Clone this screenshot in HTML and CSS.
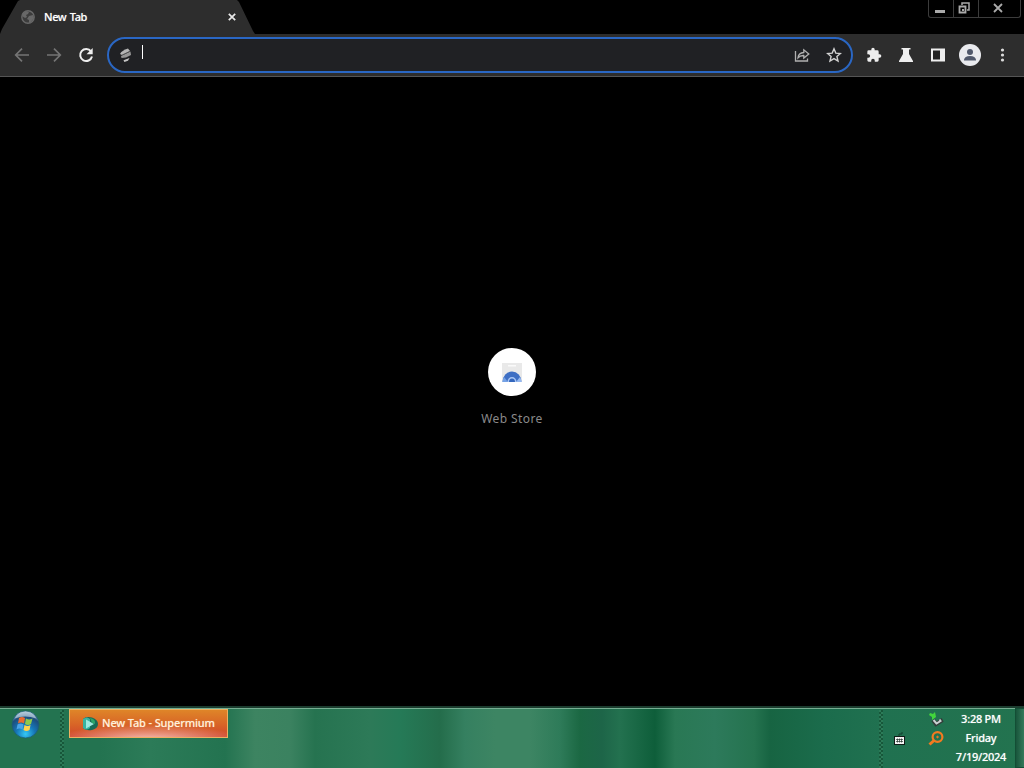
FILE: index.html
```html
<!DOCTYPE html>
<html lang="en">
<head>
  <meta charset="UTF-8">
  <title>New Tab</title>
  <link rel="stylesheet" href="styles.css">
</head>
<body>

<div class="titlebar">
  <div class="tab">
    <svg class="globe" width="14" height="14" viewBox="0 0 14 14">
      <circle cx="7" cy="7" r="6.2" fill="#3c3c3c" stroke="#686868" stroke-width="1.4"/>
      <path d="M2 3l3-2 3 1-1 2-2 1 1 2-2 1-3-2zM8 6l4-1 1 3-3 4-2 1 0-3-2-1z" fill="#686868"/>
    </svg>
    <span class="tab-title">New Tab</span>
    <svg class="tab-close" width="8" height="8" viewBox="0 0 8 8">
      <path d="M.8.8l6.4 6.4M7.2.8L.8 7.2" stroke="#e8e8e8" stroke-width="1.7"/>
    </svg>
  </div>
  <div class="window-buttons">
    <div class="win-btn minimize">
      <svg width="12" height="12" viewBox="0 0 12 12"><path d="M1 9h10v3H1z" fill="#aaa"/></svg>
    </div>
    <div class="win-btn restore">
      <svg width="12" height="12" viewBox="0 0 12 12">
        <path d="M4 3V1h7v7H9" fill="none" stroke="#aaa" stroke-width="1.5"/>
        <path d="M1.5 4.5h6v6h-6z" fill="none" stroke="#aaa" stroke-width="1.8"/>
        <path d="M4 7h2v2H4z" fill="#aaa"/>
      </svg>
    </div>
    <div class="win-btn close">
      <svg width="10" height="10" viewBox="0 0 10 10"><path d="M1 1l8 8M9 1L1 9" stroke="#aaa" stroke-width="1.8"/></svg>
    </div>
  </div>
</div>

<div class="toolbar">
  <div class="nav">
    <svg width="16" height="16" viewBox="0 0 16 16" fill="none" stroke="#747474" stroke-width="1.7"><path d="M15 8H2M8 1.7L1.7 8 8 14.3"/></svg>
    <svg width="16" height="16" viewBox="0 0 16 16" fill="none" stroke="#747474" stroke-width="1.7"><path d="M1 8h13M8 1.7L14.3 8 8 14.3"/></svg>
    <svg width="16" height="16" viewBox="0 0 16 16"><path d="M13 4.4A6 6 0 1 0 14 9.5" fill="none" stroke="#eee" stroke-width="2"/><path d="M14.7 1v6.2H8.5z" fill="#eee"/></svg>
  </div>
  <div class="omnibox">
    <svg class="site-icon" width="14" height="16" viewBox="0 0 14 16">
      <path d="M1 7Q2.5 3.5 9 1.5l2 2.5L3 8z" fill="#b5b5b5"/>
      <path d="M2 9l9.5-4.5.5 3.5-5 2.5-4.5.5z" fill="#969696"/>
      <path d="M4.5 13.2l6-2.2-1.5 2.7-3.6 1.3z" fill="#c4c4c4"/>
      <path d="M3 8l8-3.7" stroke="#555" stroke-width=".6"/>
    </svg>
    <span class="caret"></span>
    <span class="omnibox-actions">
      <svg width="16" height="16" viewBox="0 0 16 16" fill="none" stroke="#b0b0b0" stroke-width="1.3">
        <path d="M1.5 4v10h12v-2.5"/>
        <path d="M4 10.8q.4-5 5.8-5.3V2.8L14.8 7l-5 4.1V8.5Q6 8.3 4 10.8z"/>
      </svg>
      <svg width="16" height="16" viewBox="0 0 16 16" fill="none" stroke="#d2d2d2" stroke-width="1.4">
        <path d="M8 1.8l1.8 4.3 4.6.4-3.5 3 1.1 4.6L8 11.6l-4 2.5 1.1-4.6-3.5-3 4.6-.4z"/>
      </svg>
    </span>
  </div>
  <div class="actions">
    <svg width="16" height="16" viewBox="0 0 24 24" fill="#eee"><path d="M20.5 11H19V7a2 2 0 0 0-2-2h-4V3.5a2.5 2.5 0 0 0-5 0V5H4a2 2 0 0 0-2 2v3.8h1.5a2.7 2.7 0 0 1 0 5.4H2V20a2 2 0 0 0 2 2h3.8v-1.5a2.7 2.7 0 0 1 5.4 0V22H17a2 2 0 0 0 2-2v-4h1.5a2.5 2.5 0 0 0 0-5z"/></svg>
    <svg width="16" height="16" viewBox="0 0 16 16" fill="#eee"><path d="M3.5 1h9v1.5H11V7l4 7v1H1v-1l4-7V2.5H3.5z"/></svg>
    <svg width="16" height="16" viewBox="0 0 16 16"><path d="M2 2.5h12v11H2z" fill="#222" stroke="#eee" stroke-width="2"/><path d="M10 2h4v12h-4z" fill="#eee"/></svg>
    <svg class="avatar" width="22" height="22" viewBox="0 0 22 22">
      <circle cx="11" cy="11" r="11" fill="#e9eaee"/>
      <circle cx="11" cy="8" r="3" fill="#50586b"/>
      <path d="M5 15.8Q5.5 12 11 12t6 3.8v.7H5z" fill="#50586b"/>
    </svg>
    <svg width="16" height="16" viewBox="0 0 16 16" fill="#ddd"><circle cx="8.5" cy="3" r="1.6"/><circle cx="8.5" cy="8" r="1.6"/><circle cx="8.5" cy="13" r="1.6"/></svg>
  </div>
</div>

<div class="page">
  <div class="shortcut">
    <div class="shortcut-icon">
      <svg width="24" height="24" viewBox="0 0 24 24">
        <path d="M2 3h20v18H2z" fill="#e9e9e9"/>
        <path d="M8 5h8v1.5H8z" fill="#fafafa"/>
        <path d="M2.5 22a9.5 10.5 0 0 1 19 0z" fill="#3e6fc4"/>
        <path d="M2.5 22q0-3 1.5-5l4 5z" fill="#75a2e6"/>
        <path d="M21.5 22q0-3-1.5-5l-4 5z" fill="#94b8f0"/>
        <path d="M7.5 22a4.5 5 0 0 1 9 0z" fill="#a9c6f4"/>
        <path d="M9 22a3 3.5 0 0 1 6 0z" fill="#3467bd"/>
      </svg>
    </div>
    <span class="shortcut-label">Web Store</span>
  </div>
</div>

<div class="taskbar">
  <svg class="start" width="30" height="30" viewBox="0 0 30 30">
    <defs>
      <radialGradient id="orb" cx=".5" cy=".85" r=".85">
        <stop offset="0" stop-color="#35c8f5"/>
        <stop offset=".4" stop-color="#1677b8"/>
        <stop offset=".75" stop-color="#1c4d7c"/>
        <stop offset="1" stop-color="#a9c5d8"/>
      </radialGradient>
    </defs>
    <circle cx="15.5" cy="15.5" r="13.5" fill="url(#orb)" stroke="#1c5f70" stroke-width=".8"/>
    <path d="M4.5 9.500Q8 2.500 15.500 2.500t11 7Q15 5.500 4.500 9.500z" fill="#c5d7e4" opacity=".65"/>
    <path d="M9 9q3-2 6 0l-1 5.5q-3-2-6 0z" fill="#e96b31"/>
    <path d="M16 9.5q3 2 6.5 0l-1.5 5.5q-3 2-6 0z" fill="#91c94a"/>
    <path d="M7.5 15.5q3-2 6 0l-1 5q-3-2-6 0z" fill="#4aa5e6"/>
    <path d="M14.5 16q3 2 6 0l-1 5q-3 2-6 0z" fill="#ffd34d"/>
  </svg>
  <div class="grip"></div>
  <div class="task">
    <svg width="16" height="16" viewBox="0 0 16 16">
      <path d="M1 3Q4 0 10 1.5q6 2 6 6.5t-6 6q-6 1-9-2z" fill="#176b58"/>
      <path d="M1 3Q5 0 8 3v9q-4 3-7 0z" fill="#38b3a1"/>
      <path d="M4 3.5l8 4.5-8 4.5z" fill="#9ce9e0"/>
      <path d="M8 2q6 1 5 6l-3-1z" fill="#2ca568"/>
    </svg>
    <span class="task-title">New Tab - Supermium</span>
  </div>
  <div class="grip tray-grip"></div>
  <div class="tray">
    <svg class="keyboard" width="12" height="14" viewBox="0 0 12 14">
      <path d="M6 4V2h3V0" fill="none" stroke="#123f2d"/>
      <path d="M1 4h11v9H1z" fill="#101c17"/>
      <path d="M2 5h9v7H2z" fill="#f4f4f4"/>
      <path d="M3 7.5h7M3 9.5h7M4.5 6.5v4M6.5 6.5v4M8.5 6.5v4" stroke="#26372f" stroke-width=".7"/>
    </svg>
    <div class="tray-col">
      <svg width="16" height="16" viewBox="0 0 16 16">
        <path d="M5 8l3 4 5-3-1-2" fill="none" stroke="#333d3a" stroke-width="4"/>
        <path d="M5.5 8l3 3.5 4-2.5-1-1.5" fill="none" stroke="#c9d1d1" stroke-width="2"/>
        <path d="M2 1l3 1 2-2 1 5-4 3V5L1 3z" fill="#42d63c"/>
      </svg>
      <svg width="16" height="16" viewBox="0 0 16 16" fill="none" stroke="#f47a20">
        <circle cx="9.5" cy="6" r="4.9" stroke-width="2.2"/>
        <circle cx="9.5" cy="6" r=".8" fill="#f47a20"/>
        <path d="M6 9.5l-4.5 4" stroke-width="3"/>
      </svg>
    </div>
  </div>
  <div class="clock">
    <span class="time">3:28 PM</span>
    <span class="weekday">Friday</span>
    <span class="date">7/19/2024</span>
  </div>
  <div class="show-desktop"></div>
</div>

</body>
</html>
```

FILE: styles.css
```css
* {
  box-sizing: border-box;
}
body {
  margin: 0;
  width: 1024px;
  height: 768px;
  overflow: hidden;
  background: #000;
  font-family: "Noto Sans", "Open Sans", sans-serif;
  display: flex;
  flex-direction: column;
}
svg {
  display: block;
  flex: none;
}

/* Title bar */
.titlebar {
  height: 34px;
  display: flex;
  justify-content: space-between;
  align-items: flex-start;
}
.tab {
  width: 255px;
  height: 34px;
  padding: 0 19px 0 21px;
  background: #2d2d2d;
  clip-path: polygon(0 100%, 2px 29px, 18px 1px, 20px 0, 237px 0, 239px 2px, 253px 31px, 100% 100%);
  display: flex;
  align-items: center;
}
.tab-title {
  margin: 0 0 2px 9px;
  font-size: 11px;
  font-weight: 500;
  letter-spacing: -0.4px;
  word-spacing: 1px;
  color: #fff;
  text-shadow: 0 0 1px rgba(255, 255, 255, .5);
}
.tab-close {
  margin-left: auto;
}
.window-buttons {
  display: flex;
  margin-right: 3px;
  height: 18px;
  border: 1px solid #3c3c3c;
  border-top: 0;
  border-radius: 0 0 3px 3px;
}
.win-btn {
  display: flex;
  justify-content: center;
  align-items: center;
  padding: 0 3px 1px 0;
}
.minimize {
  width: 24px;
}
.minimize svg {
  margin-bottom: 3px;
}
.restore {
  width: 26px;
  padding-right: 4px;
  border: solid #3c3c3c;
  border-width: 0 1px;
}
.close {
  width: 41px;
}

/* Toolbar */
.toolbar {
  height: 43px;
  padding: 0 13px 0 14px;
  background: #2d2d2d;
  border-bottom: 1px solid #555;
  display: flex;
  align-items: center;
}
.nav {
  display: flex;
  gap: 16px;
}
.omnibox {
  width: 746px;
  height: 36px;
  margin-left: 13px;
  padding: 0 9px 0 10px;
  background: #202124;
  border: 2px solid #2a67c4;
  border-radius: 18px;
  display: flex;
  align-items: center;
}
.caret {
  width: 1px;
  height: 14px;
  margin: 0 0 6px 9px;
  background: #fff;
}
.omnibox-actions {
  margin-left: auto;
  display: flex;
  gap: 16px;
}
.actions {
  margin-left: 13px;
  display: flex;
  align-items: center;
  gap: 16px;
}
.avatar {
  margin: 0 -3px;
}

/* New tab page */
.page {
  flex: 1;
  display: flex;
  justify-content: center;
  align-items: flex-start;
  padding-top: 271px;
}
.shortcut {
  display: flex;
  flex-direction: column;
  align-items: center;
}
.shortcut-icon {
  width: 48px;
  height: 48px;
  border-radius: 50%;
  background: #fff;
  display: flex;
  justify-content: center;
  align-items: center;
}
.shortcut-label {
  margin-top: 14px;
  font-size: 12px;
  line-height: 18px;
  letter-spacing: 0.4px;
  color: #8a8a8a;
}

/* Taskbar */
.taskbar {
  height: 62px;
  padding-left: 10px;
  border-top: 2px solid #1c3d2f;
  box-shadow: inset 0 1px #76ae92;
  background: linear-gradient(90deg,
    #237350 0, #237350 100px, #2c7b58 150px, #237350 225px, #3d8461 255px,
    #3b8260 290px, #267350 315px, #2d7a58 370px, #257a57 400px, #246d4b 440px,
    #358060 465px, #3d8563 495px, #3d8563 530px, #2e7b59 560px, #1b6843 580px,
    #1d6548 602px, #23714f 620px, #0e5e3a 655px, #297854 675px, #2d7a5b 715px,
    #25734f 754px, #176442 770px, #1b6c4c 825px, #207150 880px, #23734f 1024px);
  display: flex;
  align-items: flex-start;
}
.taskbar > * {
  flex-shrink: 0;
}
.start {
  margin-top: 1px;
}
.grip {
  width: 4px;
  height: 58px;
  margin: 2px 0 0 20px;
  background: repeating-conic-gradient(#17573a 0 25%, #2c7b58 0 50%) 0 0 / 4px 4px;
}
.task {
  width: 159px;
  height: 29px;
  margin: 1px 0 0 5px;
  padding-left: 12px;
  border: 1px solid #edb061;
  background:
    radial-gradient(ellipse 60% 55% at 50% 110%, rgba(255, 215, 205, .85), transparent),
    linear-gradient(#df8528, #d86427 55%, #cf442c);
  display: flex;
  align-items: center;
}
.task-title {
  margin: 0 0 2px 4px;
  font-size: 11px;
  font-weight: 500;
  letter-spacing: -0.14px;
  white-space: nowrap;
  color: #fff0da;
  text-shadow: 0 0 1px rgba(255, 240, 218, .5);
}
.tray-grip {
  margin-left: 651px;
}
.tray {
  display: flex;
  align-items: flex-start;
  margin-left: 10px;
}
.keyboard {
  margin-top: 24px;
}
.tray-col {
  margin: 4px 0 0 23px;
  display: flex;
  flex-direction: column;
  gap: 3px;
}
.clock {
  width: 71px;
  padding: 1px 0 0 3px;
  display: flex;
  flex-direction: column;
  align-items: center;
  font-size: 11px;
  font-weight: 500;
  line-height: 19px;
  letter-spacing: -0.25px;
  color: #fff;
  text-shadow: 0 0 1px rgba(255, 255, 255, .5);
}
.show-desktop {
  width: 9px;
  height: 60px;
  border: 1px solid #134e35;
  border-right: 0;
  background: linear-gradient(90deg, #18553b, #34795a);
}
```
